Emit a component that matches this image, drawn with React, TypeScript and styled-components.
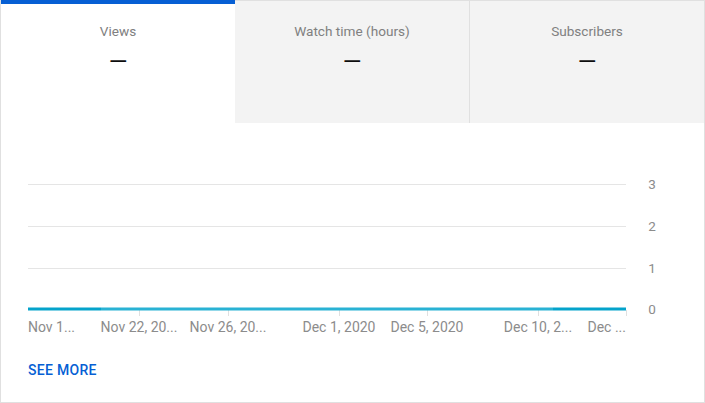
import React from "react";
import styled, { createGlobalStyle } from "styled-components";

const Global = createGlobalStyle`
  html, body { margin: 0; padding: 0; background: #fff; }
  body { font-family: Roboto, "Noto Sans", Arial, sans-serif; }
`;

const Card = styled.div`
  width: 705px;
  height: 403px;
  box-sizing: border-box;
  border: 1px solid #e0e0e0;
  border-top: none;
  background: #fff;
  display: flex;
  flex-direction: column;
  overflow: hidden;
`;

const Tabs = styled.div`
  display: grid;
  grid-template-columns: 235px 235px 1fr;
  height: 123px;
  margin-left: -1px;
  margin-right: -1px;
`;

const Tab = styled.div<{ $active?: boolean }>`
  box-sizing: border-box;
  display: flex;
  flex-direction: column;
  align-items: center;
  background: ${(p) => (p.$active ? "#fff" : "#f3f3f3")};
  border-top: ${(p) => (p.$active ? "4px solid #065fd4" : "1px solid #e0e0e0")};
  border-left: 1px solid #e0e0e0;
  border-right: ${(p) => (p.$active ? "none" : "1px solid #e0e0e0")};
  padding-top: ${(p) => (p.$active ? "19px" : "22px")};
  & + & { border-left: ${(p) => (p.$active ? "1px solid #e0e0e0" : "none")}; }
`;

const TabLabel = styled.div`
  font-size: 13.6px;
  line-height: 16px;
  color: #808080;
`;

const TabValue = styled.div`
  margin-top: 11px;
  font-size: 24px;
  line-height: 24px;
  color: #0d0d0d;
`;

const ChartWrap = styled.div`
  padding: 47px 0 0 27px;
  display: flex;
`;

const SeeMore = styled.a`
  display: inline-block;
  align-self: flex-start;
  margin: 22px 0 0 27px;
  font-size: 14px;
  line-height: 16px;
  font-weight: 500;
  letter-spacing: 0.3px;
  color: #065fd4;
  text-decoration: none;
  text-transform: uppercase;
  cursor: pointer;
`;

const grid = [
  { y: 14, label: "3" },
  { y: 56, label: "2" },
  { y: 98, label: "1" },
  { y: 139, label: "0" },
];

const xLabels = [
  { x: 0, t: "Nov 1...", anchor: "start" as const, tick: false },
  { x: 111, t: "Nov 22, 20...", anchor: "middle" as const, tick: true },
  { x: 200, t: "Nov 26, 20...", anchor: "middle" as const, tick: true },
  { x: 311, t: "Dec 1, 2020", anchor: "middle" as const, tick: true },
  { x: 399, t: "Dec 5, 2020", anchor: "middle" as const, tick: true },
  { x: 510, t: "Dec 10, 2...", anchor: "middle" as const, tick: true },
  { x: 598, t: "Dec ...", anchor: "end" as const, tick: true },
];

function Chart() {
  return (
    <svg width="660" height="170" viewBox="0 0 660 170" style={{ display: "block" }}>
      {grid.slice(0, 3).map((g) => (
        <line key={g.y} x1="0" x2="598" y1={g.y + 0.5} y2={g.y + 0.5} stroke="#e5e5e5" strokeWidth="1" />
      ))}
      {grid.map((g) => (
        <text
          key={g.label}
          x="624"
          y={g.y + 5}
          fontSize="13.5"
          fill="#8c8c8c"
          textAnchor="middle"
          fontFamily="Roboto, Arial, sans-serif"
        >
          {g.label}
        </text>
      ))}
      {xLabels.filter((l) => l.tick).map((l) => (
        <line key={l.x} x1={l.x + 0.5} x2={l.x + 0.5} y1="140" y2="146" stroke="#e0e0e0" strokeWidth="1" />
      ))}
      <line x1="0" x2="73" y1="139" y2="139" stroke="#04a3cb" strokeWidth="3" />
      <line x1="73" x2="525" y1="139" y2="139" stroke="#29b2d4" strokeWidth="3" />
      <line x1="525" x2="598" y1="139" y2="139" stroke="#04a3cb" strokeWidth="3" />
      {xLabels.map((l) => (
        <text
          key={l.t}
          x={l.x}
          y="162"
          fontSize="14"
          fill="#8c8c8c"
          textAnchor={l.anchor}
          fontFamily="Roboto, Arial, sans-serif"
        >
          {l.t}
        </text>
      ))}
    </svg>
  );
}

export default function App() {
  return (
    <>
      <Global />
      <Card>
        <Tabs>
          <Tab $active>
            <TabLabel>Views</TabLabel>
            <TabValue>—</TabValue>
          </Tab>
          <Tab>
            <TabLabel>Watch time (hours)</TabLabel>
            <TabValue>—</TabValue>
          </Tab>
          <Tab>
            <TabLabel>Subscribers</TabLabel>
            <TabValue>—</TabValue>
          </Tab>
        </Tabs>
        <ChartWrap>
          <Chart />
        </ChartWrap>
        <SeeMore>See more</SeeMore>
      </Card>
    </>
  );
}
